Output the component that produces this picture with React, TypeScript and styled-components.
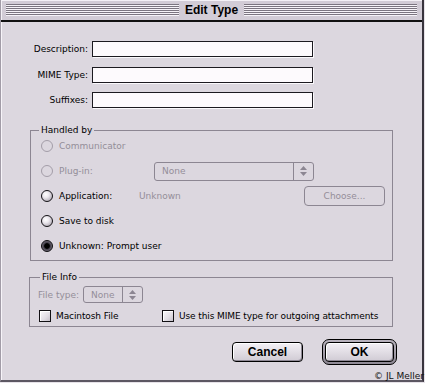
import React from 'react';
import styled, { createGlobalStyle, css } from 'styled-components';

const BG = '#dcd7df';
const DIS = '#948e99';
const LINE = '#8c8692';
const UI_FONT = `"DejaVu Sans", Verdana, sans-serif`;
const BOLD_FONT = `"Liberation Sans", Arial, sans-serif`;

const GlobalStyle = createGlobalStyle`
  html, body { margin: 0; padding: 0; background: #e6e2e8; }
  body { overflow: hidden; }
  *, *::before, *::after { box-sizing: border-box; }
`;

const Window = styled.div`
  position: relative;
  width: 424px;
  height: 382px;
  display: flex;
  flex-direction: column;
  background: ${BG};
  border-left: 1px solid #a29ca7;
  border-right: 2px solid #38343d;
  border-bottom: 2px solid #5c5762;
  font-family: ${UI_FONT};
  font-size: 9px;
  color: #000;
`;

const TitleBar = styled.div`
  flex: none;
  height: 22px;
  display: flex;
  align-items: center;
  padding: 0 5px 0 5px;
  background: #d2ccd6;
  border-bottom: 2px solid #111;
  box-shadow: inset 1px 1px 0 #f4f1f6;
`;

const Stripes = styled.div`
  flex: 1;
  height: 12px;
  background: repeating-linear-gradient(to bottom, #7b7580 0 1px, #f6f3f8 1px 2px);
`;

const Title = styled.div`
  padding: 0 6px;
  font-family: ${BOLD_FONT};
  font-weight: bold;
  font-size: 12px;
  line-height: 20px;
  white-space: nowrap;
`;

const Content = styled.div`
  flex: 1;
  display: flex;
  flex-direction: column;
  padding-top: 19px;
  box-shadow: inset 1px 0 0 #f7f4f9;
`;

const FieldGrid = styled.div`
  display: grid;
  grid-template-columns: 87px 221px;
  grid-auto-rows: 16px;
  column-gap: 4px;
  row-gap: 9.5px;
  align-items: center;
`;

const FieldLabel = styled.label`
  text-align: right;
  line-height: 16px;
  white-space: nowrap;
`;

const TextField = styled.input`
  width: 100%;
  height: 16px;
  margin: 0;
  padding: 0 3px;
  border: 1px solid #1c1a20;
  background: #fdfafd;
  box-shadow: 1px 1px 0 #fbf9fc;
  font-family: ${UI_FONT};
  font-size: 9px;
  outline: none;
`;

const Group = styled.fieldset<{ $top: number; $left: number; $width: number; $pad: string }>`
  margin: ${(p) => p.$top}px 0 0 ${(p) => p.$left}px;
  width: ${(p) => p.$width}px;
  padding: ${(p) => p.$pad};
  border: 1px solid ${LINE};
  min-width: 0;
`;

const Legend = styled.legend<{ $offset: number }>`
  padding: 0 2px;
  margin-left: ${(p) => p.$offset}px;
  font-size: 9px;
  line-height: 12px;
`;

const OptionList = styled.div`
  display: flex;
  flex-direction: column;
  gap: 5px;
`;

const OptionRow = styled.div`
  display: flex;
  align-items: center;
  height: 20px;
`;

const RadioOption = styled.label<{ $disabled?: boolean }>`
  flex: none;
  width: 98px;
  display: flex;
  align-items: center;
  gap: 6px;
  white-space: nowrap;
  color: ${(p) => (p.$disabled ? DIS : '#000')};
`;

type RadioState = 'disabled' | 'off' | 'on';

const Radio = styled.span<{ $state: RadioState }>`
  flex: none;
  width: 12px;
  height: 12px;
  border-radius: 50%;
  ${(p) =>
    p.$state === 'disabled'
      ? css`
          border: 1px solid #a39da8;
          background: transparent;
        `
      : p.$state === 'off'
      ? css`
          border: 1px solid #141216;
          background: radial-gradient(circle at 38% 35%, #ffffff 0, #ece8ee 35%, #b3adb7 80%, #8e8894 100%);
        `
      : css`
          border: 1px solid #0c0b0e;
          background: radial-gradient(circle at 50% 50%, #000 0 2.4px, #3e3a44 3.2px, #6e6875 70%, #8f8995 100%);
        `}
`;

const Popup = styled.div<{ $width: number; $height: number; $gap?: number }>`
  flex: none;
  display: flex;
  width: ${(p) => p.$width}px;
  height: ${(p) => p.$height}px;
  margin-left: ${(p) => p.$gap ?? 0}px;
  border: 1px solid ${LINE};
  border-radius: 3px;
  color: ${DIS};
`;

const PopupValue = styled.span`
  flex: 1;
  display: flex;
  align-items: center;
  padding-left: 7px;
  border-right: 1px solid ${LINE};
`;

const PopupArrows = styled.span`
  width: 19px;
  display: flex;
  align-items: center;
  justify-content: center;
`;

const Muted = styled.span`
  color: ${DIS};
  white-space: nowrap;
`;

const ChooseButton = styled.button`
  margin: 0 0 0 auto;
  width: 81px;
  height: 20px;
  padding: 0;
  border: 1px solid ${LINE};
  border-radius: 4px;
  background: transparent;
  color: ${DIS};
  font-family: ${UI_FONT};
  font-size: 9px;
`;

const FileTypeRow = styled.div`
  margin-top: 3px;
  display: flex;
  align-items: center;
  gap: 4px;
  height: 17px;
`;

const CheckRow = styled.div`
  margin-top: 6px;
  height: 14px;
  display: grid;
  grid-template-columns: 123px auto;
  align-items: center;
`;

const CheckOption = styled.label`
  display: flex;
  align-items: center;
  gap: 5px;
  padding-left: 1px;
  white-space: nowrap;
  letter-spacing: -0.1px;
`;

const CheckBox = styled.span`
  flex: none;
  width: 12px;
  height: 12px;
  border: 1px solid #121014;
  background: linear-gradient(135deg, #fbf9fc 0%, #e2dee5 60%, #c6c1ca 100%);
  box-shadow: inset 1px 1px 0 #fff;
`;

const ButtonRow = styled.div`
  margin-top: 12px;
  display: flex;
  justify-content: flex-end;
  align-items: center;
  gap: 19px;
  padding-right: 25px;
`;

const PushButton = styled.button<{ $width?: number }>`
  width: ${(p) => (p.$width ? `${p.$width}px` : '100%')};
  height: 20px;
  margin: 0;
  padding: 0;
  border: 1px solid #000;
  border-radius: 4px;
  background: linear-gradient(to bottom, #f3f0f5, #d0cbd4);
  box-shadow: inset 1px 1px 0 #fff, inset -1px -1px 0 #8f8995;
  font-family: ${BOLD_FONT};
  font-weight: bold;
  font-size: 12px;
  color: #000;
`;

const DefaultRing = styled.div`
  width: 75px;
  height: 26px;
  padding: 2px;
  border: 1px solid #000;
  border-radius: 7px;
  background: linear-gradient(to bottom, #b9b3be, #8f8995);
  display: flex;
  align-items: stretch;
`;

const Watermark = styled.div`
  position: absolute;
  right: -2px;
  bottom: -2px;
  font-size: 9px;
  line-height: 11px;
  color: #111;
  white-space: nowrap;
`;

const Arrows = () => (
  <svg width="7" height="10" viewBox="0 0 7 10">
    <polygon points="3.5,0 7,4 0,4" fill={LINE} />
    <polygon points="0,6 7,6 3.5,10" fill={LINE} />
  </svg>
);

export default function App() {
  return (
    <>
      <GlobalStyle />
      <Window>
        <TitleBar>
          <Stripes />
          <Title>Edit Type</Title>
          <Stripes />
        </TitleBar>
        <Content>
          <FieldGrid>
            <FieldLabel>Description:</FieldLabel>
            <TextField />
            <FieldLabel>MIME Type:</FieldLabel>
            <TextField />
            <FieldLabel>Suffixes:</FieldLabel>
            <TextField />
          </FieldGrid>

          <Group $top={16} $left={29} $width={363} $pad="0 7px 4px 10px">
            <Legend $offset={-2}>Handled by</Legend>
            <OptionList>
              <OptionRow>
                <RadioOption $disabled>
                  <Radio $state="disabled" />
                  Communicator
                </RadioOption>
              </OptionRow>
              <OptionRow>
                <RadioOption $disabled>
                  <Radio $state="disabled" />
                  Plug-in:
                </RadioOption>
                <Popup $width={160} $height={19} $gap={15}>
                  <PopupValue>None</PopupValue>
                  <PopupArrows>
                    <Arrows />
                  </PopupArrows>
                </Popup>
              </OptionRow>
              <OptionRow>
                <RadioOption>
                  <Radio $state="off" />
                  Application:
                </RadioOption>
                <Muted>Unknown</Muted>
                <ChooseButton>Choose...</ChooseButton>
              </OptionRow>
              <OptionRow>
                <RadioOption>
                  <Radio $state="off" />
                  Save to disk
                </RadioOption>
              </OptionRow>
              <OptionRow>
                <RadioOption>
                  <Radio $state="on" />
                  Unknown: Prompt user
                </RadioOption>
              </OptionRow>
            </OptionList>
          </Group>

          <Group $top={10} $left={28} $width={364} $pad="0 7px 3px 8px">
            <Legend $offset={2}>File Info</Legend>
            <FileTypeRow>
              <Muted>File type:</Muted>
              <Popup $width={60} $height={17}>
                <PopupValue>None</PopupValue>
                <PopupArrows>
                  <Arrows />
                </PopupArrows>
              </Popup>
            </FileTypeRow>
            <CheckRow>
              <CheckOption>
                <CheckBox />
                Macintosh File
              </CheckOption>
              <CheckOption>
                <CheckBox />
                Use this MIME type for outgoing attachments
              </CheckOption>
            </CheckRow>
          </Group>

          <ButtonRow>
            <PushButton $width={71}>Cancel</PushButton>
            <DefaultRing>
              <PushButton>OK</PushButton>
            </DefaultRing>
          </ButtonRow>
        </Content>
        <Watermark>© JL Meller</Watermark>
      </Window>
    </>
  );
}
